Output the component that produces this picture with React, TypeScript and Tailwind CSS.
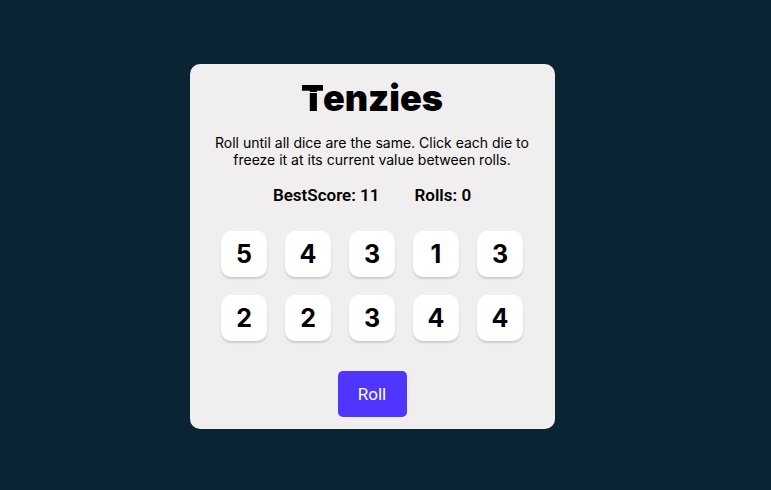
const dice = [5, 4, 3, 1, 3, 2, 2, 3, 4, 4];

function Die({ value }: { value: number }) {
  return (
    <button
      type="button"
      className="size-[46px] rounded-[10px] bg-white pt-px text-center text-[25px] font-bold text-black shadow-[0_2px_2px_rgba(0,0,0,0.15)]"
    >
      {value}
    </button>
  );
}

export default function App() {
  return (
    <div className="flex min-h-screen items-center justify-center bg-[#0b2434] pt-[3px] pr-[27px] font-['Inter',sans-serif] text-black">
      <main className="flex w-full max-w-[365px] flex-col items-center rounded-[10px] bg-[#f0eeef] px-4 pt-3 pb-3">
        <h1 className="text-4xl leading-[44px] font-black">
          <span className="bg-[linear-gradient(black_16px,transparent_16px,transparent_17px,black_17px)] bg-clip-text text-transparent">
            T
          </span>
          enzies
        </h1>
        <p className="mt-[14px] px-1 text-center text-sm leading-[17px]">
          Roll until all dice are the same. Click each die to freeze it at its current value between rolls.
        </p>
        <div className="mt-4 flex gap-[35px] font-['Roboto',sans-serif] text-[17px] leading-[22px] font-semibold">
          <span>BestScore: 11</span>
          <span>Rolls: 0</span>
        </div>
        <div className="mt-[25px] grid grid-cols-5 gap-[18px]">
          {dice.map((value, index) => (
            <Die key={index} value={value} />
          ))}
        </div>
        <button
          type="button"
          className="mt-[30px] h-[46px] w-[69px] rounded-[5px] bg-[#5035ff] pt-px font-['Roboto',sans-serif] text-[17px] text-white"
        >
          Roll
        </button>
      </main>
    </div>
  );
}
